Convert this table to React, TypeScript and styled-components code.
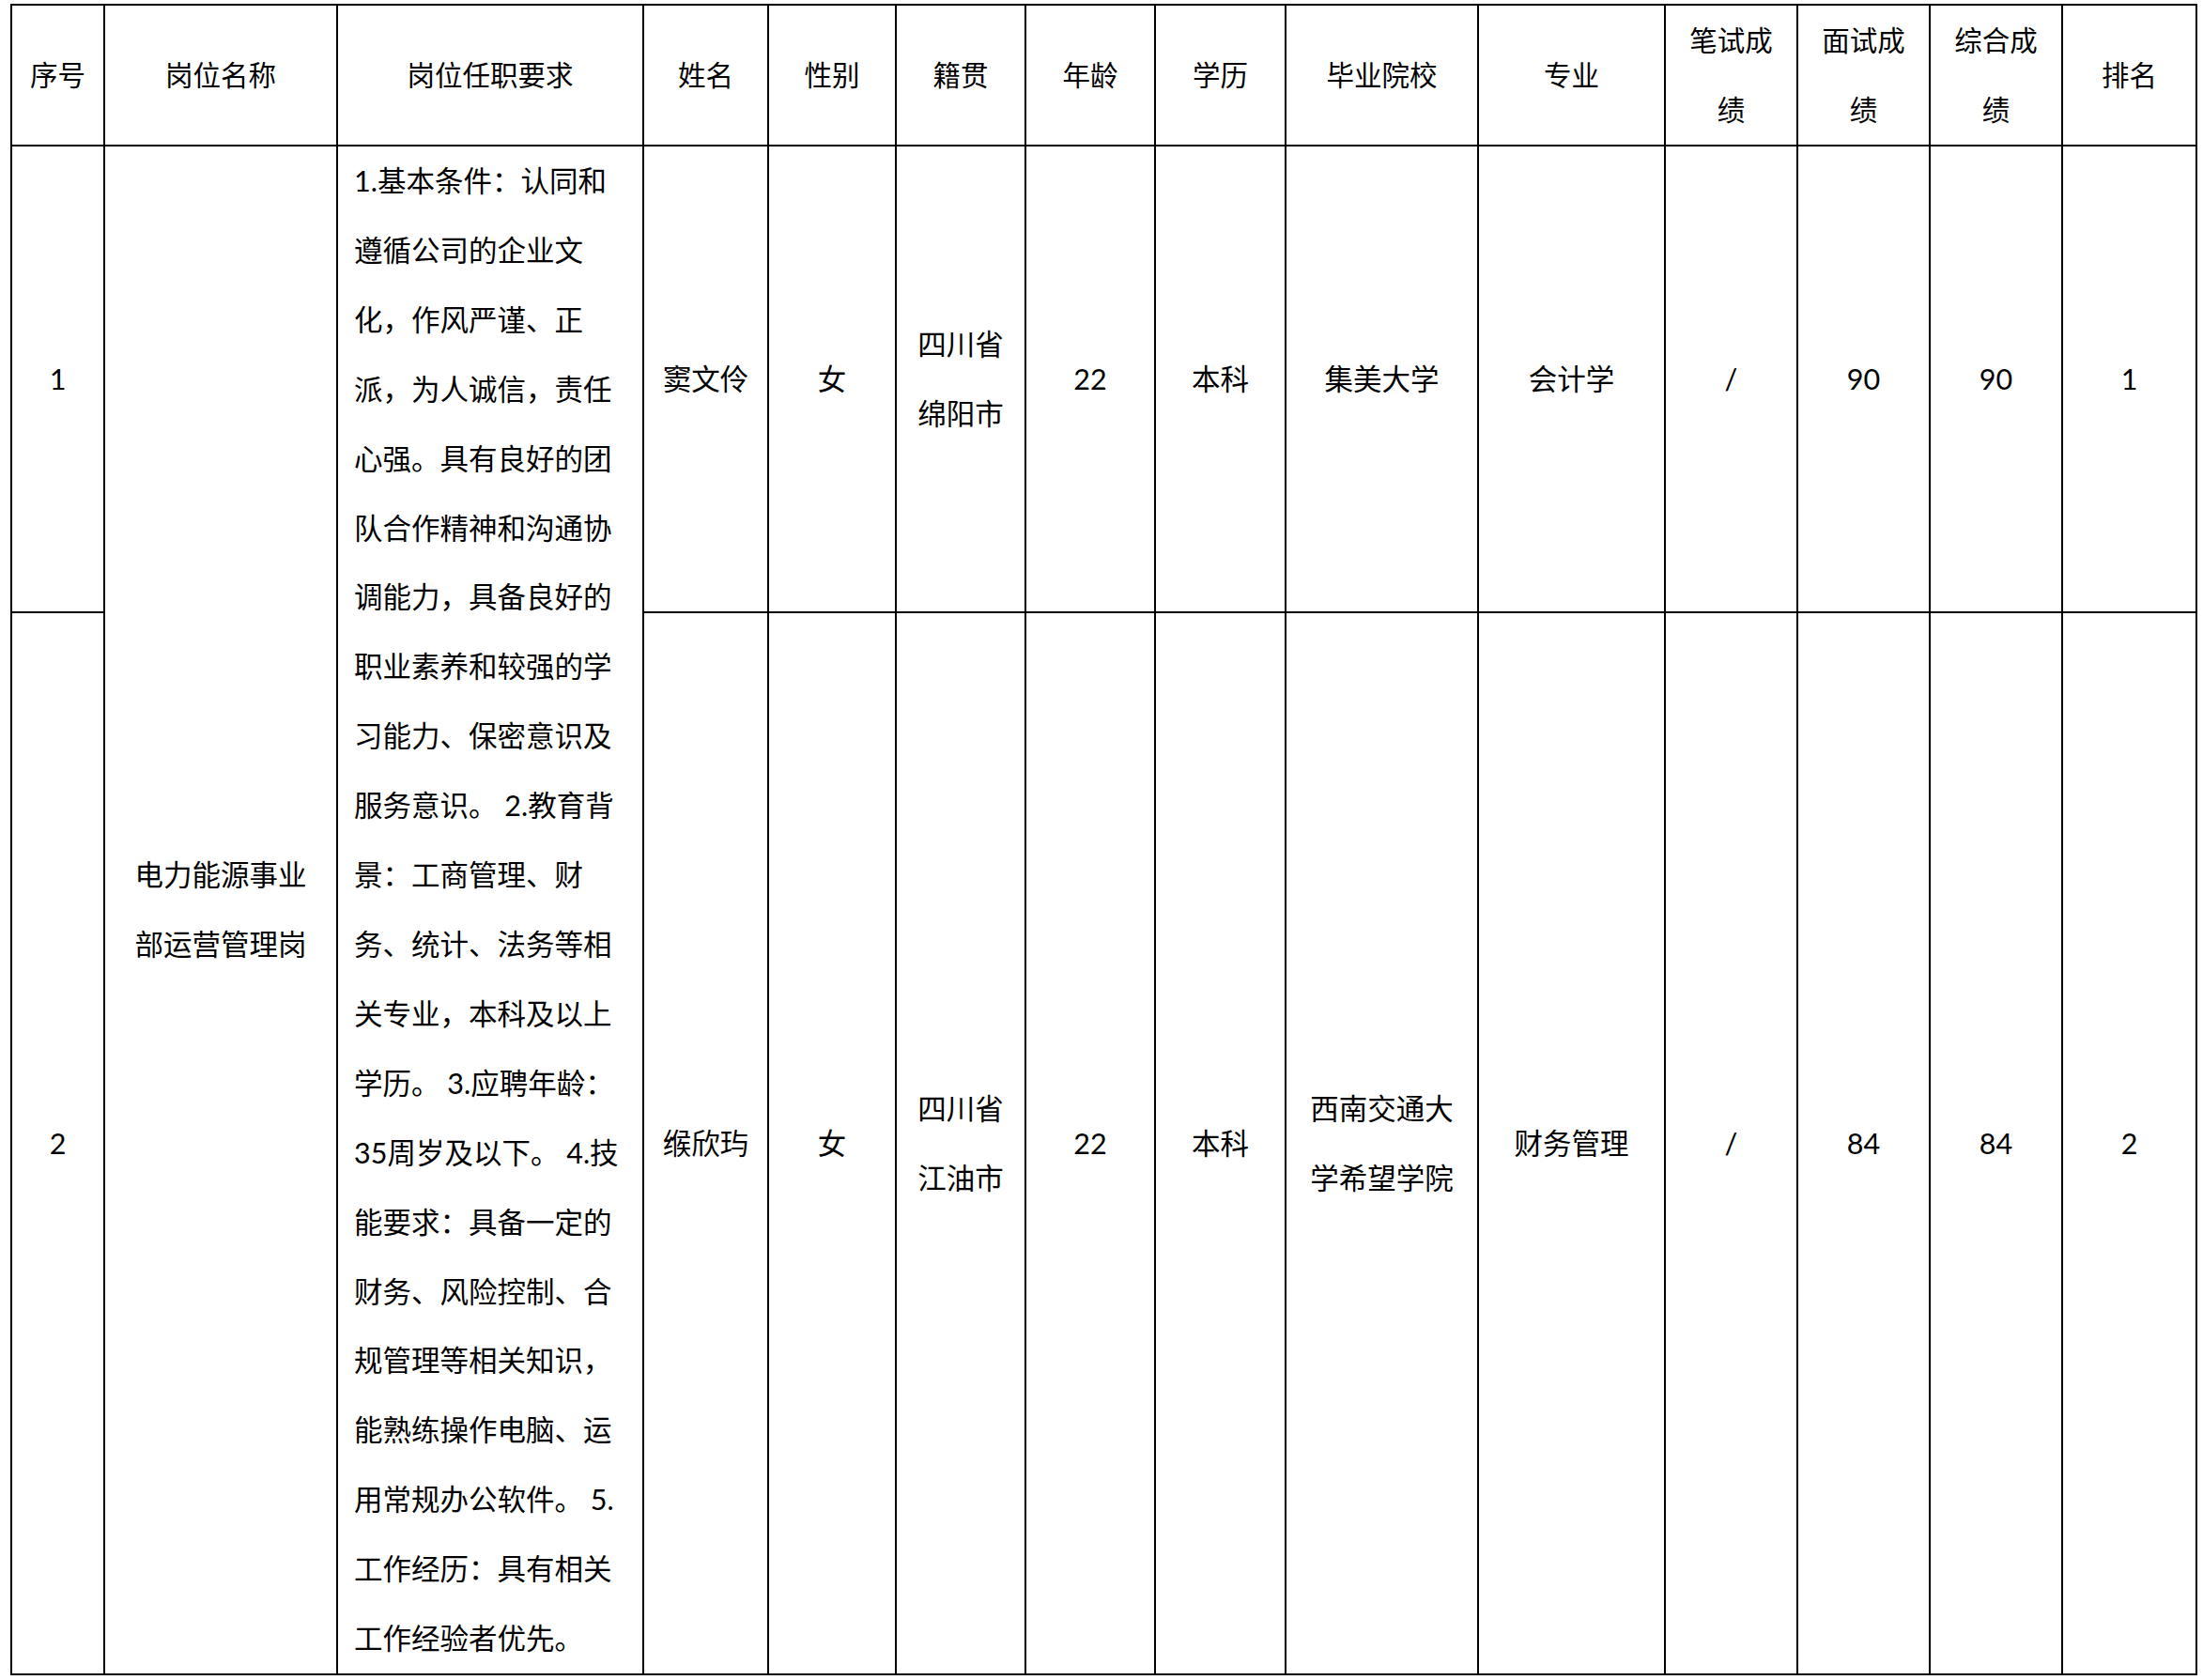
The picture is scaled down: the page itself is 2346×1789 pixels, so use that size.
import React from 'react';
import styled, { createGlobalStyle } from 'styled-components';

const GlobalStyle = createGlobalStyle`
  html, body {
    margin: 0;
    padding: 0;
    background: #fff;
  }
  body {
    font-family: Lato, "Noto Sans CJK SC", sans-serif;
    color: #000;
  }
`;

const Sheet = styled.div`
  padding: 4px 0 0 11px;
`;

const Table = styled.table`
  border-collapse: collapse;
  table-layout: fixed;
  width: 2329px;
  font-size: 30.5px;
  font-weight: 400;
  line-height: 73.9px;
`;

const Row = styled.tr<{ $h: number }>`
  height: ${p => p.$h}px;
`;

const HeadCell = styled.th`
  border: 2px solid #000;
  padding: 0 4px;
  font-weight: 400;
  font-size: 29.5px;
  text-align: center;
  vertical-align: middle;
`;

const Cell = styled.td`
  border: 2px solid #000;
  padding: 0 4px;
  text-align: center;
  vertical-align: middle;
`;

const ReqCell = styled(Cell)`
  text-align: left;
  padding: 0 0 0 17px;
`;

const Line = styled.span`
  display: block;
  white-space: nowrap;
`;

const colWidths = [99, 248, 326, 133, 136, 138, 138, 139, 205, 199, 141, 141, 141, 143];

const headers: string[][] = [
  ['序号'], ['岗位名称'], ['岗位任职要求'], ['姓名'], ['性别'], ['籍贯'], ['年龄'],
  ['学历'], ['毕业院校'], ['专业'], ['笔试成', '绩'], ['面试成', '绩'], ['综合成', '绩'], ['排名'],
];

const requirement = [
  '1.基本条件：认同和',
  '遵循公司的企业文',
  '化，作风严谨、正',
  '派，为人诚信，责任',
  '心强。具有良好的团',
  '队合作精神和沟通协',
  '调能力，具备良好的',
  '职业素养和较强的学',
  '习能力、保密意识及',
  '服务意识。 2.教育背',
  '景：工商管理、财',
  '务、统计、法务等相',
  '关专业，本科及以上',
  '学历。 3.应聘年龄：',
  '35周岁及以下。 4.技',
  '能要求：具备一定的',
  '财务、风险控制、合',
  '规管理等相关知识，',
  '能熟练操作电脑、运',
  '用常规办公软件。 5.',
  '工作经历：具有相关',
  '工作经验者优先。',
];

interface Candidate {
  no: string;
  name: string;
  gender: string;
  origin: string[];
  age: string;
  degree: string;
  school: string[];
  major: string;
  written: string;
  interview: string;
  total: string;
  rank: string;
  height: number;
}

const candidates: Candidate[] = [
  {
    no: '1', name: '窦文伶', gender: '女', origin: ['四川省', '绵阳市'], age: '22', degree: '本科',
    school: ['集美大学'], major: '会计学', written: '/', interview: '90', total: '90', rank: '1', height: 497,
  },
  {
    no: '2', name: '缑欣玙', gender: '女', origin: ['四川省', '江油市'], age: '22', degree: '本科',
    school: ['西南交通大', '学希望学院'], major: '财务管理', written: '/', interview: '84', total: '84', rank: '2', height: 1131,
  },
];

const Lines = ({ items }: { items: string[] }) => (
  <>
    {items.map((t, i) => <Line key={i}>{t}</Line>)}
  </>
);

export default function App() {
  return (
    <>
      <GlobalStyle />
      <Sheet>
        <Table>
          <colgroup>
            {colWidths.map((w, i) => <col key={i} style={{ width: w }} />)}
          </colgroup>
          <thead>
            <Row $h={150}>
              {headers.map((h, i) => (
                <HeadCell key={i}><Lines items={h} /></HeadCell>
              ))}
            </Row>
          </thead>
          <tbody>
            {candidates.map((c, idx) => (
              <Row $h={c.height} key={c.no}>
                <Cell>{c.no}</Cell>
                {idx === 0 && (
                  <>
                    <Cell rowSpan={2}><Lines items={['电力能源事业', '部运营管理岗']} /></Cell>
                    <ReqCell rowSpan={2}><Lines items={requirement} /></ReqCell>
                  </>
                )}
                <Cell>{c.name}</Cell>
                <Cell>{c.gender}</Cell>
                <Cell><Lines items={c.origin} /></Cell>
                <Cell>{c.age}</Cell>
                <Cell>{c.degree}</Cell>
                <Cell><Lines items={c.school} /></Cell>
                <Cell>{c.major}</Cell>
                <Cell>{c.written}</Cell>
                <Cell>{c.interview}</Cell>
                <Cell>{c.total}</Cell>
                <Cell>{c.rank}</Cell>
              </Row>
            ))}
          </tbody>
        </Table>
      </Sheet>
    </>
  );
}
